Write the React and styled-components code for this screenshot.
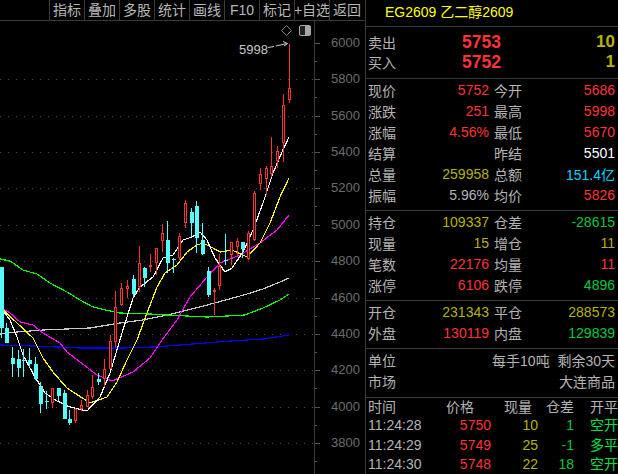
import React from "react";
import styled, { createGlobalStyle } from "styled-components";

const Global = createGlobalStyle`
  html, body { margin: 0; padding: 0; background: #000; }
`;

const FONT = `"Liberation Sans", "Noto Sans CJK SC", sans-serif`;
const C = {
  red: "#ff3232",
  olive: "#b4b400",
  green: "#00c83c",
  bright: "#00e040",
  cyan: "#00d4ff",
  white: "#ffffff",
  gray: "#b4b4b4",
  line: "#3a3a3a",
  candle: "#54ffff",
};

const Screen = styled.div`
  width: 618px;
  height: 474px;
  overflow: hidden;
  background: #000;
  display: flex;
  font-family: ${FONT};
  font-size: 14px;
  color: ${C.gray};
`;
const Left = styled.div`
  width: 365px;
  flex: none;
  display: flex;
  flex-direction: column;
`;
const Toolbar = styled.div`
  height: 20px;
  flex: none;
  padding-left: 49px;
  display: flex;
  border-bottom: 1px solid ${C.line};
`;
const ToolButton = styled.div`
  width: 34px;
  flex: none;
  border-left: 1px solid ${C.line};
  display: flex;
  align-items: center;
  justify-content: center;
  white-space: nowrap;
  line-height: 20px;
  overflow: hidden;
  color: #b8b8b8;
`;
const Chart = styled.svg`
  display: block;
  width: 365px;
  height: 453px;
  flex: none;
`;
const AxisLabel = styled.text`
  font-family: ${FONT};
  font-size: 13px;
  fill: #6c6c6c;
  text-anchor: end;
`;
const MarkLabel = styled.text`
  font-family: ${FONT};
  font-size: 13px;
  fill: #c8c8c8;
`;
const Panel = styled.div`
  flex: 1;
  min-width: 0;
  border-left: 1px solid ${C.line};
  display: flex;
  flex-direction: column;
`;
const Title = styled.div`
  height: 26px;
  flex: none;
  box-sizing: content-box;
  border-bottom: 1px solid ${C.line};
  padding-left: 19px;
  line-height: 25px;
  color: #ffff00;
  white-space: nowrap;
`;
const Section = styled.div`
  flex: none;
  padding: ${(p) => p.$top}px 3px ${(p) => p.$bottom}px 2px;
  border-bottom: 1px solid ${C.line};
`;
const QuoteRow = styled.div`
  height: 20px;
  display: flex;
  align-items: center;
`;
const QuoteLabel = styled.span`
  width: 50px;
  flex: none;
`;
const QuotePrice = styled.span`
  width: 83px;
  flex: none;
  text-align: right;
  font-size: 17.5px;
  font-weight: bold;
  color: ${C.red};
`;
const QuoteSize = styled.span`
  flex: 1;
  text-align: right;
  font-size: 17px;
  font-weight: bold;
  color: ${C.olive};
`;
const Row = styled.div`
  height: 21px;
  display: grid;
  grid-template-columns: 121px 121px;
  column-gap: 5px;
`;
const Cell = styled.div`
  display: flex;
  justify-content: space-between;
  align-items: center;
  white-space: nowrap;
`;
const Value = styled.span`
  color: ${(p) => p.$color || C.gray};
`;
const WideRow = styled.div`
  height: 21px;
  display: flex;
  justify-content: space-between;
  align-items: center;
  white-space: nowrap;
`;
const Trades = styled.div`
  flex: none;
  padding: 0 0 0 2px;
`;
const TradeRow = styled.div`
  display: grid;
  grid-template-columns: 78px 45px 47px 36px 44px;
  height: ${(p) => p.$h}px;
  line-height: ${(p) => p.$h}px;
  white-space: nowrap;
`;
const TradeCell = styled.span`
  color: ${(p) => p.$color || C.gray};
  text-align: ${(p) => p.$align || "right"};
  padding-right: ${(p) => p.$pr || 0}px;
  padding-left: ${(p) => p.$pl || 0}px;
`;

const tools = ["指标", "叠加", "多股", "统计", "画线", "F10", "标记", "+自选", "返回"];

const section1 = [
  ["现价", "5752", C.red, "今开", "5686", C.red],
  ["涨跌", "251", C.red, "最高", "5998", C.red],
  ["涨幅", "4.56%", C.red, "最低", "5670", C.red],
  ["结算", "", C.gray, "昨结", "5501", C.white],
  ["总量", "259958", C.olive, "总额", "151.4亿", C.cyan],
  ["振幅", "5.96%", C.gray, "均价", "5826", C.red],
];
const section2 = [
  ["持仓", "109337", C.olive, "仓差", "-28615", C.green],
  ["现量", "15", C.olive, "增仓", "11", C.olive],
  ["笔数", "22176", C.red, "均量", "11", C.red],
  ["涨停", "6106", C.red, "跌停", "4896", C.green],
];
const section3 = [
  ["开仓", "231343", C.olive, "平仓", "288573", C.olive],
  ["外盘", "130119", C.red, "内盘", "129839", C.green],
];
const trades = [
  ["11:24:28", "5750", "10", "1", "空开"],
  ["11:24:29", "5749", "25", "-1", "多平"],
  ["11:24:30", "5748", "22", "18", "空开"],
];

// x, wickTop, bodyTop, bodyBottom, wickBottom, up
const candles = [
  [1, 267, 267, 328, 338, 0],
  [6, 323, 328, 343, 343, 0],
  [12, 347, 358, 364, 377, 0],
  [18, 350, 359, 368, 377, 0],
  [23, 349, 360, 361, 377, 0],
  [29, 348, 360, 364, 367, 0],
  [35, 357, 364, 379, 380, 0],
  [40, 382, 386, 404, 413, 0],
  [46, 391, 401, 402, 409, 0],
  [52, 388, 388, 403, 408, 1],
  [58, 388, 388, 396, 401, 0],
  [64, 390, 393, 419, 419, 0],
  [69, 410, 419, 423, 425, 0],
  [75, 408, 409, 421, 423, 1],
  [81, 400, 405, 409, 411, 1],
  [87, 390, 395, 407, 407, 1],
  [92, 375, 387, 397, 399, 1],
  [98, 373, 379, 382, 385, 0],
  [104, 359, 369, 379, 387, 1],
  [110, 335, 341, 369, 369, 1],
  [115, 291, 307, 342, 347, 1],
  [121, 283, 288, 305, 306, 1],
  [127, 280, 286, 289, 298, 1],
  [133, 275, 279, 294, 297, 0],
  [139, 246, 263, 287, 292, 1],
  [144, 267, 268, 278, 287, 0],
  [150, 254, 265, 266, 272, 1],
  [156, 248, 248, 263, 275, 1],
  [162, 224, 233, 241, 252, 1],
  [167, 221, 240, 263, 273, 0],
  [173, 258, 259, 260, 273, 0],
  [179, 233, 236, 258, 260, 1],
  [185, 200, 203, 223, 228, 1],
  [191, 208, 212, 223, 237, 0],
  [196, 201, 206, 238, 253, 0],
  [202, 223, 240, 254, 255, 0],
  [208, 267, 271, 295, 297, 0],
  [214, 288, 290, 292, 315, 1],
  [219, 254, 266, 286, 290, 1],
  [225, 234, 260, 261, 265, 0],
  [231, 242, 242, 255, 265, 1],
  [237, 238, 241, 247, 257, 1],
  [242, 242, 242, 249, 258, 0],
  [248, 231, 233, 259, 260, 1],
  [254, 191, 193, 240, 241, 1],
  [260, 168, 174, 184, 190, 1],
  [266, 166, 168, 179, 195, 1],
  [271, 137, 166, 174, 177, 1],
  [277, 146, 151, 161, 168, 1],
  [283, 94, 105, 143, 162, 1],
  [289, 44, 88, 100, 103, 1],
];

const lines = [
  ["#c8c8c8", "0,334 17,332 43,330 90,328 120,323 143,320 167,315 200,307 233,298 247,294 263,289 280,282 289,278"],
  ["#00ff00", "0,259 10,261 23,270 37,274 50,283 67,292 80,300 93,307 110,311 120,313 150,314 167,315 207,317 227,316 245,315 263,308 280,300 289,294"],
  ["#0000ff", "0,345 33,346 57,347 80,348 123,348 153,347 180,345 230,341 263,339 289,335"],
  ["#ff00ff", "0,307 10,313 20,322 33,325 43,333 60,343 67,352 80,362 97,375 112,381 133,372 150,358 162,340 177,320 190,297 207,277 220,263 240,255 260,243 277,230 289,215"],
  ["#ffff00", "0,307 17,323 33,338 43,358 53,372 67,388 90,403 107,397 117,382 127,360 137,340 147,313 157,287 165,273 177,265 187,252 197,245 203,243 213,248 220,252 232,250 247,257 260,243 270,223 280,197 289,178"],
  ["#ffffff", "0,307 10,320 17,337 23,355 35,377 45,393 57,401 70,407 87,411 100,397 110,373 122,333 133,298 140,287 153,277 163,258 173,255 183,240 192,237 200,232 207,240 215,258 225,272 232,268 243,252 253,230 263,203 273,173 282,152 289,137"],
];

const axis = [6000, 5800, 5600, 5400, 5200, 5000, 4800, 4600, 4400, 4200, 4000, 3800];
const axisY = (i) => Math.round(43 + i * 36.36);

function Candle({ x, wt, bt, bb, wb, up }) {
  const color = up ? C.red : C.candle;
  return (
    <g shapeRendering="crispEdges">
      <line x1={x + 0.5} x2={x + 0.5} y1={wt} y2={wb} stroke={color} />
      {up ? (
        <rect x={x - 0.5} y={bt + 0.5} width={2} height={Math.max(bb - bt - 1, 1)} fill="#000" stroke={color} />
      ) : (
        <rect x={x - 1} y={bt} width={4} height={Math.max(bb - bt, 1)} fill={color} />
      )}
    </g>
  );
}

function PriceChart() {
  return (
    <Chart viewBox="0 21 365 453">
      {axis.slice(1).map((_, i) => (
        <line
          key={i}
          x1={0}
          x2={315}
          y1={axisY(i + 1) + 0.5}
          y2={axisY(i + 1) + 0.5}
          stroke="#4a4a4a"
          strokeDasharray="1 7"
          shapeRendering="crispEdges"
        />
      ))}
      {lines.map(([color, points]) => (
        <polyline key={color} points={points} fill="none" stroke={color} strokeWidth="1.2" shapeRendering="crispEdges" />
      ))}
      {candles.map(([x, wt, bt, bb, wb, up]) => (
        <Candle key={x} x={x} wt={wt} bt={bt} bb={bb} wb={wb} up={up} />
      ))}
      <line x1={314.5} x2={314.5} y1={21} y2={474} stroke={C.line} shapeRendering="crispEdges" />
      {axis.map((value, i) => (
        <g key={value}>
          <line x1={315} x2={320} y1={axisY(i) + 0.5} y2={axisY(i) + 0.5} stroke="#555" shapeRendering="crispEdges" />
          <line x1={315} x2={317} y1={axisY(i) + 18.5} y2={axisY(i) + 18.5} stroke="#555" shapeRendering="crispEdges" />
          <AxisLabel x={360} y={axisY(i) + 4}>{value}</AxisLabel>
        </g>
      ))}
      <MarkLabel x={239} y={54}>5998</MarkLabel>
      <path d="M268 47.5 L274 46.5 M276 46 L287 43.5 M283 41.5 L287.5 43.5 L284 46" fill="none" stroke="#c8c8c8" strokeWidth="1" />
      <path d="M286.5 25.5 L291.5 30.5 L286.5 35.5 L281.5 30.5 Z" fill="none" stroke="#808080" />
      <rect x={299.5} y={25.5} width={11} height={10} rx={1.5} fill="#222" stroke="#a8a8a8" />
      <rect x={305} y={26} width={5} height={9} fill="#a8a8a8" />
    </Chart>
  );
}

function DataRows({ rows }) {
  return rows.map(([a, av, ac, b, bv, bc]) => (
    <Row key={a}>
      <Cell>
        <span>{a}</span>
        <Value $color={ac}>{av}</Value>
      </Cell>
      <Cell>
        <span>{b}</span>
        <Value $color={bc}>{bv}</Value>
      </Cell>
    </Row>
  ));
}

export default function App() {
  return (
    <>
      <Global />
      <Screen>
        <Left>
          <Toolbar>
            {tools.map((t) => (
              <ToolButton key={t}>{t}</ToolButton>
            ))}
          </Toolbar>
          <PriceChart />
        </Left>
        <Panel>
          <Title>EG2609 乙二醇2609</Title>
          <Section $top={5} $bottom={6}>
            <QuoteRow>
              <QuoteLabel>卖出</QuoteLabel>
              <QuotePrice>5753</QuotePrice>
              <QuoteSize>10</QuoteSize>
            </QuoteRow>
            <QuoteRow>
              <QuoteLabel>买入</QuoteLabel>
              <QuotePrice>5752</QuotePrice>
              <QuoteSize>1</QuoteSize>
            </QuoteRow>
          </Section>
          <Section $top={0} $bottom={5}>
            <DataRows rows={section1} />
          </Section>
          <Section $top={0} $bottom={5}>
            <DataRows rows={section2} />
          </Section>
          <Section $top={0} $bottom={5}>
            <DataRows rows={section3} />
          </Section>
          <Section $top={0} $bottom={6}>
            <WideRow>
              <span>单位</span>
              <span>每手10吨&nbsp;&nbsp;剩余30天</span>
            </WideRow>
            <WideRow>
              <span>市场</span>
              <span>大连商品</span>
            </WideRow>
          </Section>
          <Trades>
            <TradeRow $h={18}>
              <TradeCell $align="left">时间</TradeCell>
              <TradeCell $align="left">价格</TradeCell>
              <TradeCell $pr={6}>现量</TradeCell>
              <TradeCell>仓差</TradeCell>
              <TradeCell $align="left" $pl={16}>开平</TradeCell>
            </TradeRow>
            {trades.map(([time, price, qty, diff, kind]) => (
              <TradeRow $h={19.5} key={time}>
                <TradeCell $align="left">{time}</TradeCell>
                <TradeCell $color={C.red}>{price}</TradeCell>
                <TradeCell $color={C.olive}>{qty}</TradeCell>
                <TradeCell $color={C.green}>{diff}</TradeCell>
                <TradeCell $color={C.bright} $align="left" $pl={16}>{kind}</TradeCell>
              </TradeRow>
            ))}
          </Trades>
        </Panel>
      </Screen>
    </>
  );
}
